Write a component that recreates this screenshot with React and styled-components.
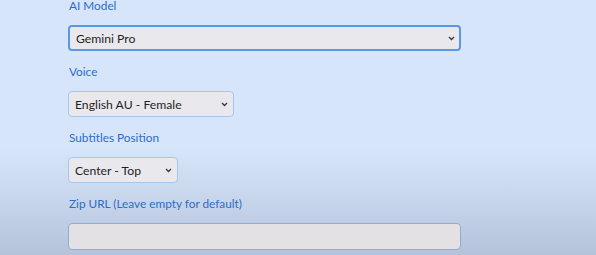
import React from 'react';
import styled, { createGlobalStyle } from 'styled-components';

const GlobalStyle = createGlobalStyle`
  html, body {
    margin: 0;
    padding: 0;
    height: 100%;
  }
  body {
    font-family: Lato, "Noto Sans", sans-serif;
    background: linear-gradient(180deg, #d7e5fb 0%, #d7e5fb 58%, #cbd9ef 74%, #b4c3da 100%);
    min-height: 255px;
    overflow: hidden;
  }
`;

const Form = styled.div`
  display: flex;
  flex-direction: column;
  padding: 0 0 0 68px;
  margin-top: -2px;
`;

const Field = styled.div`
  display: flex;
  flex-direction: column;
  align-items: flex-start;
  margin-bottom: 13px;
`;

const Label = styled.label`
  font-size: 11.8px;
  line-height: 16px;
  color: #2c6ec4;
  margin: 0 0 11px 1px;
`;

const SelectWrap = styled.div`
  position: relative;
  width: ${p => p.width}px;
`;

const Select = styled.select`
  appearance: none;
  -webkit-appearance: none;
  width: 100%;
  height: 26px;
  box-sizing: border-box;
  padding: 0 20px 0 6px;
  font-family: inherit;
  font-size: 12.2px;
  color: #1f1f24;
  background: #e9e8ed;
  border: ${p => (p.focused ? '2px solid #5799e3' : '1px solid #a9c5ea')};
  border-radius: 4px;
  outline: none;
`;

const Chevron = styled.svg`
  position: absolute;
  right: 6px;
  top: 50%;
  width: 7px;
  height: 5px;
  margin-top: -2px;
  pointer-events: none;
`;

const TextInput = styled.input`
  width: 393px;
  height: 27px;
  box-sizing: border-box;
  background: #e3e1e4;
  border: 1px solid #8fadd0;
  border-radius: 4px;
  outline: none;
`;

const Arrow = () => (
  <Chevron viewBox="0 0 7 5">
    <path d="M1 1 L3.5 3.5 L6 1" fill="none" stroke="#3a3a40" strokeWidth="1.4" />
  </Chevron>
);

const App = () => (
  <>
    <GlobalStyle />
    <Form>
      <Field>
        <Label>AI Model</Label>
        <SelectWrap width={393}>
          <Select focused defaultValue="gemini">
            <option value="gemini">Gemini Pro</option>
          </Select>
          <Arrow />
        </SelectWrap>
      </Field>
      <Field>
        <Label>Voice</Label>
        <SelectWrap width={166}>
          <Select defaultValue="au-f">
            <option value="au-f">English AU - Female</option>
          </Select>
          <Arrow />
        </SelectWrap>
      </Field>
      <Field>
        <Label>Subtitles Position</Label>
        <SelectWrap width={110}>
          <Select defaultValue="ct">
            <option value="ct">Center - Top</option>
          </Select>
          <Arrow />
        </SelectWrap>
      </Field>
      <Field>
        <Label>Zip URL (Leave empty for default)</Label>
        <TextInput type="text" />
      </Field>
    </Form>
  </>
);

export default App;
